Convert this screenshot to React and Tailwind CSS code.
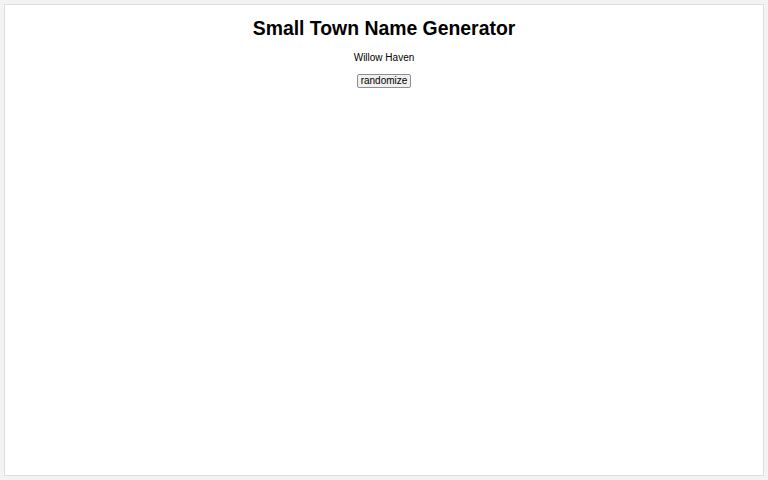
export default function App() {
  return (
    <div className="h-[480px] bg-[#f3f3f3] p-1 font-['Liberation_Sans',Arial,sans-serif]">
      <div className="flex h-full flex-col items-center border border-[#dddddd] bg-white pt-[9px]">
        <h1 className="text-[19.4px] font-bold leading-[28px] text-black">Small Town Name Generator</h1>
        <p className="mt-[10px] text-[10px] leading-[12px] text-black">Willow Haven</p>
        <button className="mt-[10px] rounded-[2px] border border-[#8f8f8f] bg-[#f0f0f0] px-[3px] text-[10px] leading-[12px] text-black">
          randomize
        </button>
      </div>
    </div>
  );
}
